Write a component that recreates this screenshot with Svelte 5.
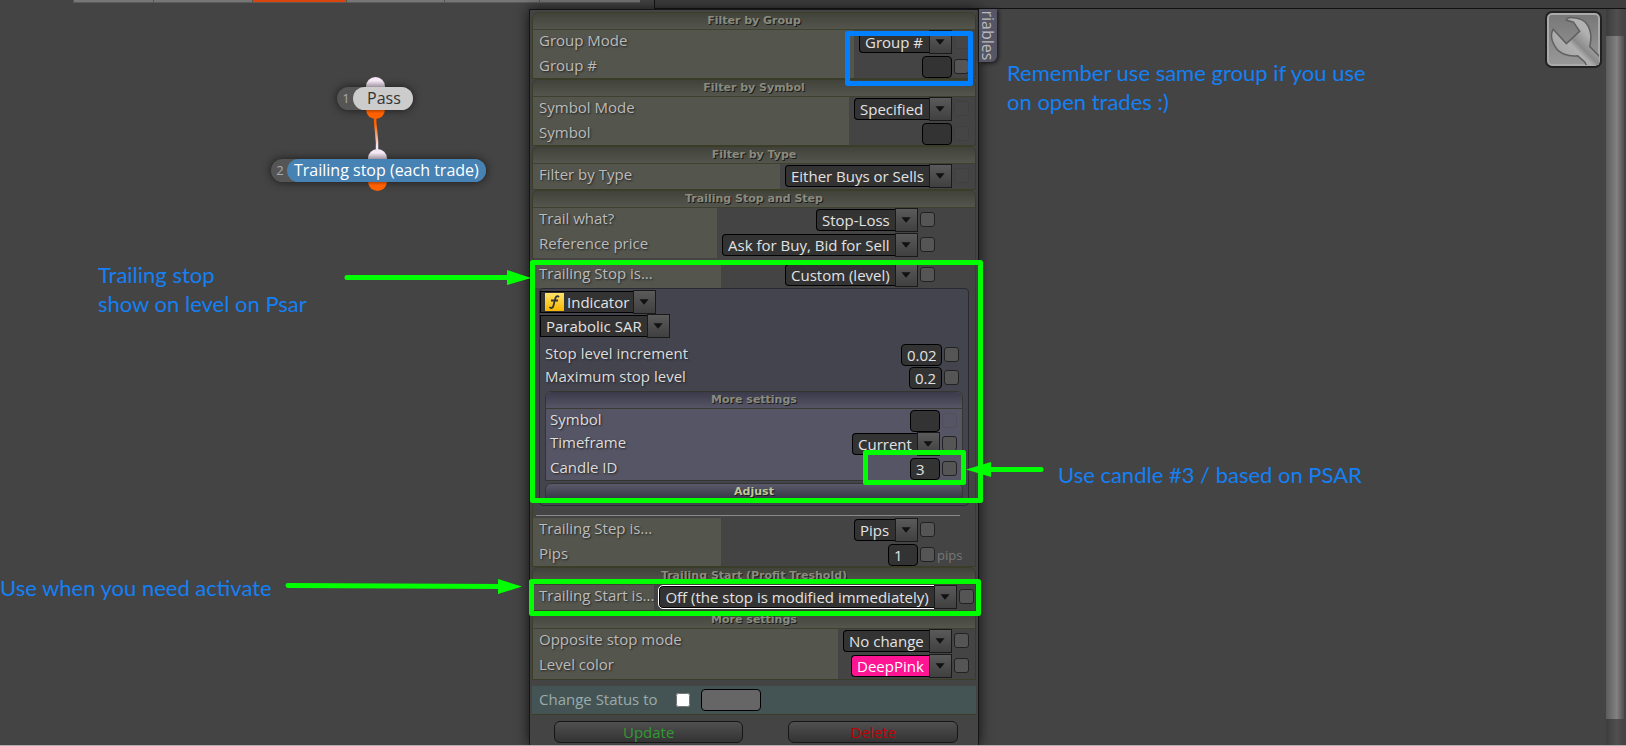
<script lang="ts">
  type Field = {
    id: string;
    label: string;
    value: string;
    kind: "select" | "input";
    lock?: "faint";
    size?: string;
    unit?: string;
    look?: string;
  };

  type Group = { title: string; fields: Field[] };

  const tabs = [80, 99, 94, 98, 95, 101];

  const filters: Group[] = [
    {
      title: "Filter by Group",
      fields: [
        { id: "group-mode", label: "Group Mode", value: "Group #", kind: "select", lock: "faint" },
        { id: "group-no", label: "Group #", value: "", kind: "input" },
      ],
    },
    {
      title: "Filter by Symbol",
      fields: [
        { id: "symbol-mode", label: "Symbol Mode", value: "Specified", kind: "select", lock: "faint" },
        { id: "symbol", label: "Symbol", value: "", kind: "input", lock: "faint" },
      ],
    },
    {
      title: "Filter by Type",
      fields: [
        { id: "type", label: "Filter by Type", value: "Either Buys or Sells", kind: "select", lock: "faint" },
      ],
    },
  ];

  const trail: Field[] = [
    { id: "trail-what", label: "Trail what?", value: "Stop-Loss", kind: "select" },
    { id: "reference", label: "Reference price", value: "Ask for Buy, Bid for Sell", kind: "select" },
  ];

  const stop: Field[] = [
    { id: "stop-is", label: "Trailing Stop is...", value: "Custom (level)", kind: "select" },
  ];

  const sar: Field[] = [
    { id: "increment", label: "Stop level increment", value: "0.02", kind: "input", size: "wide" },
    { id: "maximum", label: "Maximum stop level", value: "0.2", kind: "input", size: "medium" },
  ];

  const candle: Field[] = [
    { id: "candle-symbol", label: "Symbol", value: "", kind: "input", lock: "faint" },
    { id: "timeframe", label: "Timeframe", value: "Current", kind: "select" },
    { id: "candle-id", label: "Candle ID", value: "3", kind: "input" },
  ];

  const step: Field[] = [
    { id: "step-is", label: "Trailing Step is...", value: "Pips", kind: "select" },
    { id: "pips", label: "Pips", value: "1", kind: "input", unit: "pips" },
  ];

  const endings: Group[] = [
    {
      title: "Trailing Start (Profit Treshold)",
      fields: [
        {
          id: "start-is",
          label: "Trailing Start is...",
          value: "Off (the stop is modified immediately)",
          kind: "select",
          look: "focused",
        },
      ],
    },
    {
      title: "More settings",
      fields: [
        { id: "opposite", label: "Opposite stop mode", value: "No change", kind: "select" },
        { id: "color", label: "Level color", value: "DeepPink", kind: "select", look: "pink" },
      ],
    },
  ];
</script>

{#snippet arrow()}
  <svg class="arrow" viewBox="0 0 23 24" aria-hidden="true">
    <path d="M6 9h10l-5 6z" fill="#111" />
  </svg>
{/snippet}

{#snippet rows(fields: Field[])}
  <div class="rows">
    {#each fields as field}
      <label class="name {field.kind}-row" for={field.id}>{field.label}</label>
      <div class="control {field.kind}-row">
        {#if field.kind === "select"}
          <span class="drop {field.look ?? ''}">
            <select id={field.id}><option>{field.value}</option></select>
            {@render arrow()}
          </span>
        {:else}
          <input class="text {field.size ?? ''}" id={field.id} type="text" value={field.value} />
        {/if}
        <input
          class="lock"
          class:faint={field.lock === "faint"}
          type="checkbox"
          aria-label="Adjust {field.label}"
          disabled={field.lock === "faint"}
        />
        <span class="unit">{field.unit ?? ""}</span>
      </div>
    {/each}
  </div>
{/snippet}

{#snippet section(group: Group)}
  <section class="group">
    <h3>{group.title}</h3>
    {@render rows(group.fields)}
  </section>
{/snippet}

<main>
  <header>
    <nav>
      {#each tabs as width, i}
        <span class="tab" class:active={i === 2} style:width="{width}px"></span>
      {/each}
    </nav>
    <div class="toolbar"></div>
  </header>

  <div class="workspace">
    <div class="canvas">
      <svg class="wire" width="20" height="40" viewBox="0 0 20 40" aria-hidden="true">
        <defs>
          <linearGradient id="wire" x1="0" y1="0" x2="0" y2="1">
            <stop offset="0.2" stop-color="#ff6000" />
            <stop offset="0.8" stop-color="#f3e6f3" />
          </linearGradient>
        </defs>
        <path d="M5 2C5 16 8 20 7 38" fill="none" stroke="url(#wire)" stroke-width="2.500" />
      </svg>
      <div class="node pass">
        <i class="pin in"></i><i class="pin out"></i>
        <span class="num">1</span><span class="title">Pass</span>
      </div>
      <div class="node trailing">
        <i class="pin in"></i><i class="pin out"></i>
        <span class="num">2</span><span class="title">Trailing stop (each trade)</span>
      </div>
    </div>

    <form class="panel">
      {#each filters as group}
        {@render section(group)}
      {/each}

      <section class="group steps">
        <h3>Trailing Stop and Step</h3>
        {@render rows(trail)}
        <div class="spaced">{@render rows(stop)}</div>
        <div class="box">
          <div class="picker">
            <span class="drop square">
              <span class="face">
                <svg width="19" height="18" viewBox="0 0 19 18" aria-hidden="true">
                  <defs>
                    <linearGradient id="gold" x1="0" y1="0" x2="0" y2="1">
                      <stop offset="0" stop-color="#fde36a" />
                      <stop offset="1" stop-color="#f7b600" />
                    </linearGradient>
                  </defs>
                  <rect width="19" height="18" fill="url(#gold)" />
                  <path
                    d="M14 4c-2-2-3.500 0-4 2.500l-1.500 6C8 15 6 16 4.500 14M6 7.500h7"
                    fill="none"
                    stroke="#333"
                    stroke-width="1.800"
                  />
                </svg>
                <select aria-label="Source"><option>Indicator</option></select>
              </span>
              {@render arrow()}
            </span>
            <span class="drop square">
              <select aria-label="Indicator"><option>Parabolic SAR</option></select>
              {@render arrow()}
            </span>
          </div>
          <div class="sar">{@render rows(sar)}</div>
          <section class="more">
            <h3>More settings</h3>
            {@render rows(candle)}
          </section>
          <button class="adjust" type="button">Adjust</button>
        </div>
        <hr />
        {@render rows(step)}
      </section>

      {#each endings as group}
        {@render section(group)}
      {/each}

      <div class="status">
        <label for="status">Change Status to</label>
        <input id="status" type="checkbox" />
        <input class="state" type="text" aria-label="Status" />
      </div>

      <div class="actions">
        <button class="update" type="button">Update</button>
        <button class="delete" type="button">Delete</button>
      </div>
    </form>

    <a class="variables" href="/">Variables</a>

    <div class="tools">
      <button class="wrench" type="button" aria-label="Settings">
        <svg viewBox="0 0 50 50" aria-hidden="true">
          <defs>
            <linearGradient id="steel" x1="0" y1="1" x2="1" y2="0">
              <stop offset="0.2" stop-color="#a4a4a4" />
              <stop offset="0.42" stop-color="#b0b0b0" />
              <stop offset="0.5" stop-color="#8a8a8a" />
              <stop offset="0.7" stop-color="#b2b2b2" />
            </linearGradient>
          </defs>
          <path
            d="M18 6C19 3 23 3 27 4C37 5 42 13 42 23C42 28 41 31 41 32L51 42V51H38L36 47L29 41C20 42 11 39 7 32C4 27 2 20 5 15L18 29L31 17L25 8Z"
            fill="url(#steel)"
            stroke="#606060"
            stroke-width="1.500"
          />
        </svg>
      </button>
      <div class="scrollbar"><div class="thumb"></div></div>
    </div>
  </div>

  <svg class="marks" width="1100" height="640" viewBox="0 0 1100 640" aria-hidden="true">
    <g fill="none" stroke-width="5" stroke-linejoin="round">
      <rect x="847.500" y="33.500" width="123" height="50" stroke="#0080ff" />
      <g stroke="#0f0">
        <rect x="532.500" y="262.500" width="448" height="238" />
        <rect x="865.500" y="452.500" width="98" height="30" />
        <rect x="531.500" y="581.500" width="447" height="32" />
        <path d="M347 277.500H510M288 585.500L502 586.500M1041 469.500H988" stroke-linecap="round" />
      </g>
    </g>
    <path d="M507 270L531 278L507 285ZM498 579L522 586.500L498 594ZM991 462L966 469.500L991 477Z" fill="#0f0" />
  </svg>
  <p class="note group-note">Remember use same group if you use<br />on open trades :)</p>
  <p class="note stop-note">Trailing stop<br />show on level on Psar</p>
  <p class="note candle-note">Use candle #3 / based on PSAR</p>
  <p class="note start-note">Use when you need activate</p>
</main>

<style>
  :global(body) {
    background: #444;
  }

  main {
    position: relative;
    height: 100vh;
    box-sizing: border-box;
    overflow: hidden;
    display: flex;
    flex-direction: column;
    border-bottom: 1px solid #b5adad;
    font-family: "Open Sans", "Noto Sans", sans-serif;
    font-size: 15px;
    color: #bbb;
  }

  header {
    display: flex;
    align-items: flex-start;
    gap: 14px;
    height: 9px;
    padding-left: 73px;
  }

  nav {
    display: flex;
    background: #777;
    border-bottom: 1px solid #5a5a5a;
  }

  .tab {
    box-sizing: border-box;
    height: 2px;
    border-left: 1px solid #555;
  }

  .active {
    background: #d9440c;
  }

  .toolbar {
    flex: 1;
    box-sizing: border-box;
    height: 9px;
    background: #3e3e3e;
    border-left: 1px solid #111;
    border-bottom: 1px solid #111;
  }

  .workspace {
    flex: 1;
    min-height: 0;
    display: flex;
    align-items: flex-start;
  }

  .canvas {
    position: relative;
    width: 529px;
    align-self: stretch;
  }

  .node {
    position: absolute;
    display: flex;
    height: 23px;
    line-height: 22px;
    border-radius: 12px;
    background: #555;
    box-shadow: 0 0 8px #1a1a1a;
  }

  .pass {
    left: 337px;
    top: 78px;
  }

  .trailing {
    left: 271px;
    top: 150px;
  }

  .num {
    width: 16px;
    padding-left: 2px;
    box-sizing: border-box;
    text-align: center;
    font-size: 13px;
    color: #aaa;
  }

  .title {
    position: relative;
    padding: 0 7px;
    border-radius: 12px;
    background: #4682b4;
    color: #fff;
    font-size: 16px;
    font-weight: 500;
  }

  .pass .title {
    padding: 0 12px 0 14px;
    background: #ccc;
    color: #333;
    font-weight: 400;
  }

  .pin {
    position: absolute;
    left: 29px;
    width: 19px;
    height: 19px;
    border-radius: 50%;
  }

  .trailing .pin {
    left: 97px;
  }

  .in {
    top: -10px;
    background: linear-gradient(#f6e8f6 20%, #8a808a 60%);
  }

  .out {
    bottom: -9px;
    background: linear-gradient(#b04000 50%, #ff6000 70%);
  }

  .wire {
    position: absolute;
    left: 370px;
    top: 106px;
    z-index: 1;
  }

  .panel {
    box-sizing: border-box;
    width: 450px;
    align-self: stretch;
    padding: 2px 2px 0;
    border: solid #151515;
    border-width: 1px 1px 0;
    box-shadow: 0 0 12px #111;
    overflow: hidden;
  }

  .group {
    border: 1px solid #3b3d28;
    border-radius: 6px 6px 0 0;
  }

  h3,
  .adjust {
    display: block;
    box-sizing: border-box;
    height: 17px;
    margin: 0;
    font-family: "DejaVu Sans", sans-serif;
    font-size: 11px;
    font-weight: 700;
    line-height: 16px;
    text-align: center;
    color: #8b8b7d;
    text-shadow: 1px 1px 0 #1c1c1c;
    border-bottom: 1px solid #3e4030;
    border-radius: 6px 6px 0 0;
    background: linear-gradient(#41423a, #54554d);
  }

  .rows {
    display: grid;
    grid-template-columns: 1fr max-content;
  }

  .steps > .rows,
  .spaced .rows {
    grid-template-columns: 17fr 23fr;
  }

  .name {
    padding-left: 6px;
    line-height: 21px;
    white-space: nowrap;
    background: #54554d;
    text-shadow: 1px 1px 2px #222;
  }

  .select-row {
    height: 25px;
  }

  .input-row {
    height: 23px;
  }

  .control {
    display: flex;
    align-items: center;
    justify-content: flex-end;
    gap: 2px;
    padding: 0 4px 0 5px;
    box-sizing: border-box;
  }

  .control.select-row {
    padding-bottom: 2px;
  }

  .drop {
    display: flex;
    align-items: center;
  }

  select,
  .text {
    box-sizing: border-box;
    height: 22px;
    margin: 0;
    padding: 0 5px;
    border: 1px solid #000;
    border-radius: 4px;
    background: #333;
    color: #e2e2e2;
    font: inherit;
    line-height: 20px;
    appearance: none;
  }

  select {
    border-right: 0;
    border-radius: 4px 0 0 4px;
  }

  .text {
    width: 30px;
  }

  .wide {
    width: 41px;
  }

  .medium {
    width: 33px;
  }

  .arrow {
    box-sizing: border-box;
    width: 23px;
    height: 24px;
    border: 1px solid #1a1a1a;
    background: linear-gradient(#5a5a5a, #404040);
  }

  .pink select {
    background: #ff1493;
    color: #fff;
    font-weight: 500;
  }

  .focused select {
    outline: 1px solid #fff;
  }

  .lock {
    box-sizing: border-box;
    width: 15px;
    height: 15px;
    margin: 0;
    border: 1px solid #222;
    border-radius: 3px;
    background: #555;
    appearance: none;
  }

  .faint {
    opacity: 0.1;
  }

  .unit {
    font-size: 13px;
    color: #777;
  }

  .steps > .rows .unit,
  .spaced .unit {
    width: 34px;
  }

  .spaced {
    margin-top: 5px;
  }

  .box {
    margin: 0 6px;
    padding: 1px 5px 4px;
    border: 1px solid #292930;
    border-radius: 4px;
    background: #44444f;
  }

  .box .name {
    padding-left: 0;
    background: none;
    color: #ddd;
  }

  .picker {
    margin-left: -5px;
  }

  .square select,
  .face {
    border-radius: 0;
  }

  .face {
    display: flex;
    align-items: center;
    box-sizing: border-box;
    height: 22px;
    padding-left: 4px;
    border: 1px solid #000;
    border-right: 0;
    background: #333;
  }

  .face select {
    height: 20px;
    padding: 0 3px;
    border: 0;
  }

  .sar {
    margin-top: 5px;
  }

  .sar .control {
    padding-right: 2px;
  }

  .more {
    margin-top: 2px;
    border: 1px solid #35352f;
    border-radius: 6px 6px 0 0;
    background: #555566;
  }

  .more h3,
  .adjust {
    background: linear-gradient(#3b3a4b, #555566);
    border-bottom-color: #3b3b33;
  }

  .more .name {
    padding-left: 4px;
  }

  .more .control {
    padding-right: 3px;
  }

  .adjust {
    width: 100%;
    height: 18px;
    margin-top: 2px;
    padding: 0;
    border: 1px solid #35352f;
    background: linear-gradient(#5a5a6c, #333344);
    color: #c4c494;
    line-height: 14px;
  }

  hr {
    height: 1px;
    margin: 9px 15px 2px 3px;
    border: 0;
    background: #8a8a8a;
  }

  .status {
    display: flex;
    align-items: center;
    height: 28px;
    margin-top: 6px;
    padding-left: 7px;
    background: #445454;
    border-bottom: 1px solid #3b3d28;
  }

  .status label {
    line-height: 26px;
    align-self: flex-start;
    color: #9aabab;
    font-weight: 500;
  }

  #status {
    width: 14px;
    height: 14px;
    margin: 0 11px 0 18px;
  }

  .state {
    box-sizing: border-box;
    width: 60px;
    height: 22px;
    border: 1px solid #000;
    border-radius: 4px;
    background: #666;
  }

  .actions {
    display: flex;
    gap: 45px;
    padding: 6px 18px 0 22px;
  }

  .actions button {
    flex: 189;
    height: 22px;
    padding: 0;
    border: 1px solid #161616;
    border-radius: 6px;
    background: linear-gradient(#505050, #333);
    color: #339933;
    font: inherit;
    font-weight: 500;
    line-height: 20px;
  }

  .actions .delete {
    flex: 169;
    color: #c00000;
  }

  .variables {
    display: flex;
    justify-content: flex-end;
    box-sizing: border-box;
    width: 18px;
    height: 53px;
    padding-bottom: 2px;
    overflow: hidden;
    border-radius: 0 0 6px 0;
    background: #555566;
    box-shadow: 1px 1px 4px #111;
    writing-mode: vertical-rl;
    font-size: 16px;
    line-height: 18px;
    color: #bbb;
    text-decoration: none;
  }

  .tools {
    flex: 1;
    align-self: stretch;
    display: flex;
    justify-content: flex-end;
    align-items: flex-start;
    gap: 4px;
    padding-right: 2px;
  }

  .wrench {
    box-sizing: border-box;
    width: 57px;
    height: 57px;
    margin-top: 2px;
    padding: 1px;
    border: 2px solid #222;
    border-radius: 7px;
    background: linear-gradient(#777, #999);
    box-shadow: inset 0 0 0 2px #aaa;
  }

  .wrench svg {
    display: block;
    width: 100%;
  }

  .scrollbar {
    align-self: stretch;
    width: 18px;
    padding: 27px 0 26px;
    box-sizing: border-box;
    background: linear-gradient(90deg, #3c3c3c, #505050 60%, #444);
  }

  .thumb {
    height: 100%;
    background: linear-gradient(90deg, #5c5c5c, #828282 60%, #505050);
  }

  .marks {
    position: absolute;
    left: 0;
    top: 0;
    pointer-events: none;
  }

  .note {
    position: absolute;
    margin: 0;
    font-family: Lato, sans-serif;
    font-size: 22px;
    line-height: 29px;
    white-space: nowrap;
    color: #1480f5;
  }

  .group-note {
    left: 1007px;
    top: 58px;
  }

  .stop-note {
    left: 98px;
    top: 260px;
  }

  .candle-note {
    left: 1058px;
    top: 460px;
  }

  .start-note {
    left: 0;
    top: 573px;
  }
</style>
